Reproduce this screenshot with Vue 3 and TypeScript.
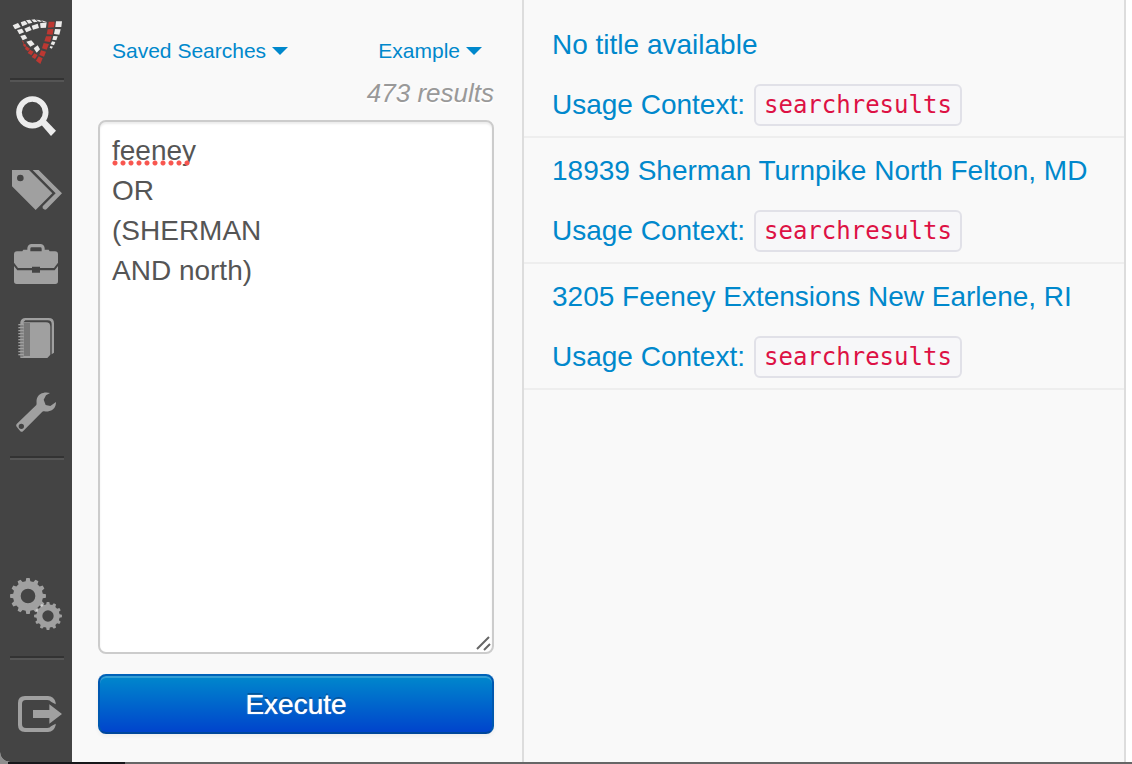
<script setup lang="ts">
import { ref } from 'vue'

interface Result {
  title: string
  context: string
}

const query = ref('feeney\nOR\n(SHERMAN\nAND north)')

const results: Result[] = [
  { title: 'No title available', context: 'searchresults' },
  { title: '18939 Sherman Turnpike North Felton, MD', context: 'searchresults' },
  { title: '3205 Feeney Extensions New Earlene, RI', context: 'searchresults' },
]

/** Outline of a twelve-toothed cog with a round hole. */
function gear(cx: number, cy: number, outer: number, root: number, hole: number): string {
  const teeth = 12
  const step = (Math.PI * 2) / teeth
  const at = (r: number, a: number) =>
    `${(cx + r * Math.sin(a)).toFixed(1)} ${(cy - r * Math.cos(a)).toFixed(1)}`
  const points: string[] = []
  for (let i = 0; i < teeth; i++) {
    const a = i * step
    points.push(at(root, a - step * 0.3), at(outer, a - step * 0.18))
    points.push(at(outer, a + step * 0.18), at(root, a + step * 0.3))
  }
  return (
    `M${points.join('L')}Z` +
    `M${cx - hole} ${cy}a${hole} ${hole} 0 1 0 ${hole * 2} 0a${hole} ${hole} 0 1 0 ${-hole * 2} 0Z`
  )
}

const bigGear = gear(84, 107, 54, 45, 22)
const smallGear = gear(144, 167, 42, 35, 17)
const ringMarks = Array.from({ length: 11 }, (_, i) => 74 + i * 9)
</script>

<template>
  <div class="window">
    <div class="app">
      <nav class="sidebar" aria-label="Main">
        <a class="brand" href="#" aria-label="Home">
          <svg width="51" height="46" viewBox="36 57 153 138" aria-hidden="true">
            <g fill="#ecebea">
              <path d="M38 76L54 69L62 81L45 88Z" />
              <path d="M62 67L75 62L83 72L67 79Z" />
              <path d="M78 61L90 59L97 68L86 71Z" />
              <path d="M94 59L104 58L113 65L102 67Z" />
              <path d="M108 59L119 60L126 65L117 65Z" />
              <path d="M123 61L132 63L140 66L130 66Z" />
              <path d="M73 86L89 79L95 90L79 97Z" />
              <path d="M95 77L113 71L117 84L99 89Z" />
              <path d="M120 70L140 67L138 83L122 84Z" />
              <path d="M51 90L66 86L72 97L58 103Z" />
              <path d="M61 108L75 104L82 115L68 121Z" />
              <path d="M79 125L94 121L104 133L91 140Z" />
              <path d="M101 145L113 136L120 148L110 158Z" />
              <path d="M168 64L186 64L184 81L166 81Z" />
              <path d="M165 87L182 88L178 104L162 102Z" />
              <path d="M160 108L173 109L169 121L157 119Z" />
              <path d="M156 124L166 126L162 136L152 133Z" />
              <path d="M151 138L159 140L155 146L149 143Z" />
            </g>
            <g fill="#bd3832">
              <path d="M146 65L164 65L162 82L144 83Z" />
              <path d="M143 88L160 87L158 104L140 103Z" />
              <path d="M138 109L155 109L150 126L133 124Z" />
              <path d="M131 129L147 132L140 149L126 145Z" />
              <path d="M123 151L138 155L132 170L118 165Z" />
              <path d="M116 169L128 175L121 192L108 182Z" />
              <path d="M103 160L113 165L105 177L95 171Z" />
              <path d="M90 149L101 155L94 166L83 159Z" />
              <path d="M79 139L90 146L84 154L75 147Z" />
              <path d="M70 130L78 134L77 143L70 137Z" />
              <path d="M65 121L71 125L71 132Z" />
            </g>
          </svg>
        </a>
        <hr />
        <div class="group">
          <a class="item active" href="#search" aria-label="Search">
            <svg width="40" height="40" viewBox="48 288 120 120" aria-hidden="true">
              <circle cx="97" cy="337" r="40" fill="none" stroke="#ececec" stroke-width="17" />
              <path d="M120 370L134 357L168 392L153 408Z" fill="#ececec" />
            </svg>
          </a>
          <a class="item" href="#tags" aria-label="Tags">
            <svg width="52" height="40" viewBox="30 60 156 120" aria-hidden="true">
              <path
                fill="#a0a0a0"
                fill-rule="evenodd"
                d="M36 60H87L157 130L107 180L36 109ZM51 84a10 10 0 1 0 20 0a10 10 0 1 0 -20 0Z"
              />
              <path d="M98 60H116L186 130L140 177Q135 182 128 175V169L167 130Z" fill="#a0a0a0" />
            </svg>
          </a>
          <a class="item" href="#cases" aria-label="Cases">
            <svg width="44" height="40" viewBox="42 282 132 120" aria-hidden="true">
              <g fill="#a0a0a0">
                <path
                  fill-rule="evenodd"
                  d="M51 304H67L70 299H82V294Q84 282 95 282H121Q132 282 134 294V299H146L149 304H165Q174 304 174 313V338L162 354H120V350H96V354H54L42 338V313Q42 304 51 304ZM91 304H125V296Q125 292 121 292H95Q91 292 91 296Z"
                />
                <path d="M42 348L52 361H96V368H120V361H164L174 348V394Q174 402 166 402H50Q42 402 42 394Z" />
              </g>
            </svg>
          </a>
          <a class="item" href="#notebook" aria-label="Notebook">
            <svg width="36" height="40" viewBox="54 54 108 120" aria-hidden="true">
              <path d="M61 174V66Q64 54 76 54H146Q162 54 162 70V158L155 163V73Q155 61 143 61H76L70 67H138Q151 67 151 80V164L142 174Z" fill="#a0a0a0" />
              <path d="M71 69H90V168H71Z" fill="#777" />
              <path
                v-for="y in ringMarks"
                :key="y"
                :d="`M55 ${y}H71`"
                stroke="#a0a0a0"
                stroke-width="4"
              />
              <path
                v-for="y in ringMarks"
                :key="-y"
                :d="`M61 ${y + 4}H70`"
                stroke="#666"
                stroke-width="3"
              />
            </svg>
          </a>
          <a class="item" href="#tools" aria-label="Tools">
            <svg width="40" height="40" viewBox="48 275 120 120" aria-hidden="true">
              <path
                fill="#a0a0a0"
                fill-rule="evenodd"
                d="M150 278C134 273 116 279 111 294C108 303 111 308 109 314L50 371Q47 375 50 379L61 393Q65 396 69 393L127 334C134 331 138 335 146 333C160 330 168 320 168 305L151 317L137 314L131 298L138 285ZM56 378a8 8 0 1 0 16 0a8 8 0 1 0 -16 0Z"
              />
            </svg>
          </a>
        </div>
        <hr />
        <div class="spacer"></div>
        <a class="item settings" href="#settings" aria-label="Settings">
          <svg width="52" height="52" viewBox="30 53 156 156" aria-hidden="true">
            <path :d="bigGear" fill="#a0a0a0" fill-rule="evenodd" />
            <path :d="smallGear" fill="#a0a0a0" fill-rule="evenodd" />
            <path d="M121 134L127 130L130 137L124 140ZM107 147L114 147L113 154L107 153Z" fill="#d0d0d0" />
          </svg>
        </a>
        <hr />
        <a class="item logout" href="#logout" aria-label="Log out">
          <svg width="44" height="36" viewBox="54 408 132 108" aria-hidden="true">
            <path
              fill="#a0a0a0"
              d="M167 433V428Q162 408 144 408H75Q54 408 54 429V495Q54 516 75 516H144Q162 516 167 496V491L153 499Q150 504 142 504H78Q66 504 66 492V432Q66 420 78 420H142Q150 420 153 425Z"
            />
            <path d="M99 450H148V433L186 462L148 491V474H99Z" fill="#a0a0a0" />
          </svg>
        </a>
      </nav>

      <form class="search" @submit.prevent>
        <div class="menus">
          <button type="button" class="menu" aria-haspopup="true">
            Saved Searches <span class="caret" aria-hidden="true"></span>
          </button>
          <button type="button" class="menu" aria-haspopup="true">
            Example <span class="caret" aria-hidden="true"></span>
          </button>
        </div>
        <p class="count">473 results</p>
        <div class="editor">
          <textarea v-model="query" aria-label="Search query" spellcheck="false"></textarea>
          <span class="misspelled" aria-hidden="true"></span>
          <svg class="grip" width="16" height="16" viewBox="0 0 16 16" aria-hidden="true">
            <path d="M2 13L14 1M9 14L15 8" stroke="#666" stroke-width="2" />
          </svg>
        </div>
        <button type="submit" class="execute">Execute</button>
      </form>

      <main class="results">
        <ul>
          <li v-for="result in results" :key="result.title">
            <a href="#">
              <span class="title">{{ result.title }}</span>
              <span class="context">Usage Context: <code>{{ result.context }}</code></span>
            </a>
          </li>
        </ul>
      </main>
    </div>
    <div class="edge"></div>
  </div>
</template>

<style>
body {
  margin: 0;
  background: #8e8e8e;
}
</style>

<style scoped>
* {
  box-sizing: border-box;
}

.window {
  display: flex;
  flex-direction: column;
  min-height: 100vh;
  font-family: 'Helvetica Neue', Helvetica, 'Liberation Sans', Arial, sans-serif;
  font-size: 28px;
  line-height: 40px;
}

.app {
  flex: 1;
  display: flex;
  background: #fff;
  border-bottom-left-radius: 10px;
  overflow: hidden;
}

.edge {
  height: 2px;
  background: linear-gradient(90deg, #8e8e8e 8px, #17171a 8px, #17171a 125px, #666 125px);
}

.sidebar {
  flex: 0 0 72px;
  display: flex;
  flex-direction: column;
  background: #444;
}

.sidebar svg {
  display: block;
}

.sidebar hr {
  width: 54px;
  height: 4px;
  margin: 0 8px 0 10px;
  border: 0;
  border-top: 2px solid #333;
  background: #555;
}

.brand {
  padding: 19px 0 13px 12px;
}

.group {
  padding-bottom: 4px;
}

.item {
  display: flex;
  justify-content: center;
  padding: 14px 0 20px;
}

.spacer {
  flex: 1;
}

.settings {
  padding: 0 0 26px;
}

.logout {
  padding: 36px 0 30px 8px;
}

.search {
  flex: 0 0 450px;
  display: flex;
  flex-direction: column;
  padding: 31px 28px 28px 26px;
  background: #f9f9f9;
}

.menus {
  display: flex;
  justify-content: space-between;
  padding: 0 12px 0 14px;
}

.menu {
  display: flex;
  align-items: center;
  gap: 6px;
  padding: 0;
  border: 0;
  background: none;
  color: #08c;
  font: inherit;
  font-size: 21px;
  line-height: 40px;
  cursor: pointer;
}

.caret {
  border: 8px solid transparent;
  border-top-color: #08c;
  border-bottom: 0;
}

.count {
  margin: 0 0 5px;
  color: #999;
  font-size: 26px;
  font-style: italic;
  line-height: 44px;
  text-align: right;
  text-shadow: 0 2px 0 #fff;
}

.editor {
  flex: 1;
  display: flex;
  position: relative;
  margin-bottom: 20px;
}

textarea {
  flex: 1;
  min-width: 0;
  padding: 9px 12px;
  border: 2px solid #ccc;
  border-radius: 8px;
  outline: 0;
  background: #fff;
  box-shadow: inset 0 2px 2px rgba(0, 0, 0, 0.075);
  color: #555;
  font: inherit;
  line-height: 40px;
  resize: none;
}

.misspelled {
  position: absolute;
  left: 14px;
  top: 40px;
  width: 80px;
  height: 6px;
  background: radial-gradient(circle at 3px 3px, #f8564f 2px, transparent 3px) 0 0 / 8px 6px;
}

.grip {
  position: absolute;
  right: 3px;
  bottom: 2px;
}

.execute {
  height: 60px;
  padding: 2px 0 0;
  border: 2px solid;
  border-color: #0062b8 #0058b0 #00479c;
  border-radius: 8px;
  background: linear-gradient(#08c, #04c);
  box-shadow: inset 0 2px 0 rgba(255, 255, 255, 0.2), 0 2px 4px rgba(0, 0, 0, 0.05);
  color: #fff;
  font: inherit;
  text-shadow: 0 0 1px #fff, 0 -2px 0 rgba(0, 0, 0, 0.25);
  cursor: pointer;
}

.results {
  flex: 1;
  min-width: 0;
  margin-right: 6px;
  padding-top: 12px;
  border: solid #ddd;
  border-width: 0 2px;
  background: #f9f9f9;
}

ul {
  margin: 0;
  padding: 0;
  list-style: none;
}

li {
  border-bottom: 2px solid #eee;
}

li a {
  display: flex;
  flex-direction: column;
  gap: 20px;
  padding: 13px 28px 11px;
  color: #08c;
  text-decoration: none;
}

.context {
  display: flex;
  align-items: center;
  gap: 9px;
  height: 40px;
}

code {
  padding: 2px 8px;
  border: 2px solid #e1e1e8;
  border-radius: 6px;
  background: #f7f7f9;
  color: #d14;
  font-family: Monaco, 'DejaVu Sans Mono', monospace;
  font-size: 24px;
  line-height: 34px;
}
</style>
